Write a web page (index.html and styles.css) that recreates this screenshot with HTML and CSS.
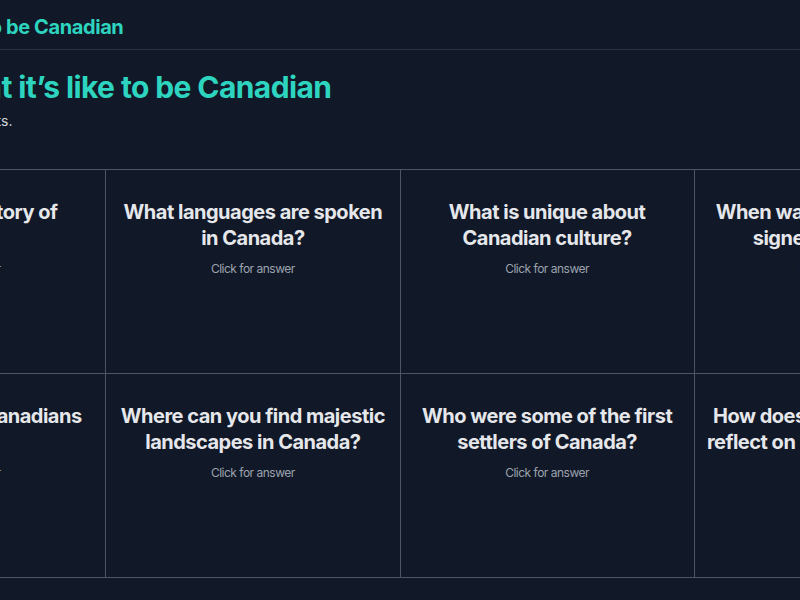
FILE: index.html
```html
<!DOCTYPE html>
<html lang="en">
<head>
    <meta charset="UTF-8">
    <title>How to be Canadian</title>
    <link rel="stylesheet" href="styles.css">
</head>
<body>
    <header class="topbar">
        <div class="topbar-inner">
            <a class="brand" href="#">How to be Canadian</a>
        </div>
    </header>
    <section class="intro">
        <h1>What it&rsquo;s like to be Canadian</h1>
        <p class="lead">Basic facts.</p>
    </section>
    <div class="cards">
        <div class="card">
            <h2>What is the history of Canada?</h2>
            <span class="hint">Click for answer</span>
        </div>
        <div class="card">
            <h2>What languages are spoken in Canada?</h2>
            <span class="hint">Click for answer</span>
        </div>
        <div class="card">
            <h2>What is unique about Canadian culture?</h2>
            <span class="hint">Click for answer</span>
        </div>
        <div class="card">
            <h2>When was the Constitution signed by Canada?</h2>
            <span class="hint">Click for answer</span>
        </div>
        <div class="card">
            <h2>What sports do Canadians love?</h2>
            <span class="hint">Click for answer</span>
        </div>
        <div class="card">
            <h2>Where can you find majestic landscapes in Canada?</h2>
            <span class="hint">Click for answer</span>
        </div>
        <div class="card">
            <h2>Who were some of the first settlers of Canada?</h2>
            <span class="hint">Click for answer</span>
        </div>
        <div class="card">
            <h2>How does Canadian cuisine reflect on its diverse history?</h2>
            <span class="hint">Click for answer</span>
        </div>
    </div>
</body>
</html>
```

FILE: styles.css
```css
html{
    overflow: hidden;
}
body{
    margin: 0;
    background: #111827;
    color: #e5e7eb;
    font-family: Inter, "Noto Sans", sans-serif;
    display: flex;
    flex-direction: column;
    align-items: center;
}
.topbar{
    width: 100%;
    border-bottom: 1px solid #2b3241;
    display: flex;
    justify-content: center;
}
.topbar-inner{
    flex: none;
    width: 928px;
    padding: 13px 16px 8px;
}
.brand{
    color: #2dd4bf;
    text-decoration: none;
    font-size: 20px;
    line-height: 28px;
    font-weight: 700;
    letter-spacing: -0.4px;
}
.intro{
    flex: none;
    width: 928px;
    padding: 0 16px;
    margin-top: 19px;
}
.intro h1{
    margin: 0;
    color: #2dd4bf;
    font-size: 30px;
    line-height: 36px;
    font-weight: 700;
    letter-spacing: -0.6px;
}
.lead{
    margin: 6px 0 0;
    font-size: 14px;
    line-height: 20px;
    color: #d1d5db;
}
.cards{
    flex: none;
    width: 1176px;
    margin-top: 38px;
    display: grid;
    grid-template-columns: repeat(4, 1fr);
    grid-auto-rows: 203px;
    gap: 1px;
    background: #4b5563;
    border: 1px solid #4b5563;
}
.card{
    background: #111827;
    padding: 29px 12px 0;
    text-align: center;
    cursor: pointer;
}
.card h2{
    margin: 0;
    font-size: 20px;
    line-height: 26px;
    font-weight: 700;
    letter-spacing: -0.5px;
    color: #e5e7eb;
}
.hint{
    display: block;
    margin-top: 10px;
    font-size: 12px;
    line-height: 16px;
    letter-spacing: -0.5px;
    color: #9ca3af;
}
```
